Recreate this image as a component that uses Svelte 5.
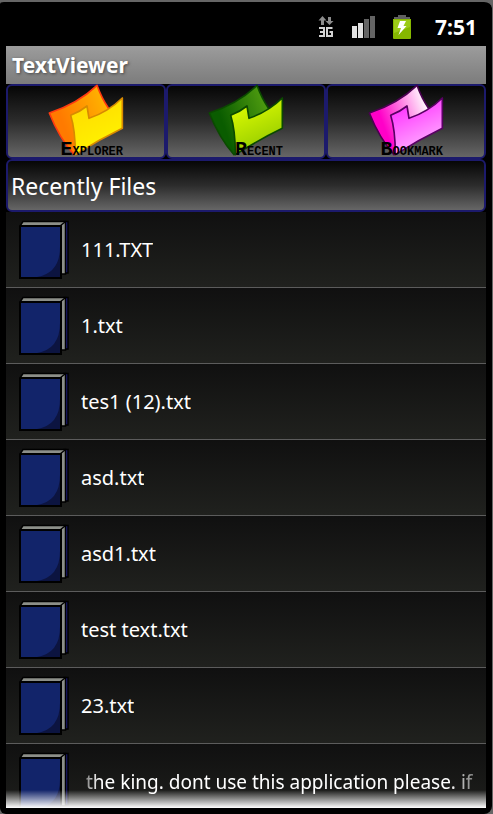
<script lang="ts">
  const tabs = [
    { id: "explorer", label: "Explorer", back: ["#ff7a00", "#ffb400"], front: ["#ffd800", "#fff600"], edge: "#ff3a10", line: "#d88a00" },
    { id: "recent", label: "Recent", back: ["#0a5c00", "#4f9c10"], front: ["#e4ff00", "#8fc800"], edge: "#0b4a00", line: "#0b4a00" },
    { id: "bookmark", label: "Bookmark", back: ["#ff00c8", "#ffffff"], front: ["#ff22ff", "#ffb8ff"], edge: "#4a0050", line: "#5a0064" },
  ];

  const files = [
    "111.TXT",
    "1.txt",
    "tes1 (12).txt",
    "asd.txt",
    "asd1.txt",
    "test text.txt",
    "23.txt",
    "the king. dont use this application please. if",
  ];

  let current = $state("recent");
</script>

<div class="device">
  <header class="status">
    <svg class="net" viewBox="0 0 16 22" aria-label="3G">
      <path fill="#8c8c8c" d="M4.500 0L8.500 4.500H6V9H3V4.500H.5zM11.500 9L7.500 5H10V1H13V5H15.500z" />
      <path fill="none" stroke="#d2d2d2" stroke-width="2" d="M1 12H6V20H1M2 16H6M14.500 12H9V20H14V16H11.500" />
    </svg>
    <svg class="signal" viewBox="0 0 24 22" aria-label="Signal">
      <path fill="#e2e2e2" d="M0 10H5V22H0zM6 7H11V22H6z" />
      <path fill="#646464" d="M12 3H17V22H12zM18 0H23V22H18z" />
    </svg>
    <svg class="battery" viewBox="0 0 18 24" aria-label="Charging">
      <path fill="#606060" d="M1 5V2H5V0H13V2H17V5z" />
      <path fill="#86b800" d="M0 4H18V23Q18 24 17 24H1Q0 24 0 23z" />
      <path fill="#9ccb18" d="M1 5H17V12L1 18z" />
      <path fill="#fff" d="M7 6H13L10.500 11H13.500L5.500 20L8 13H4.500z" />
    </svg>
    <time>7:51</time>
  </header>

  <h1>TextViewer</h1>

  <nav>
    {#each tabs as tab (tab.id)}
      <button class="tab" aria-pressed={current === tab.id} onclick={() => (current = tab.id)}>
        <svg viewBox="138 12 240 222" aria-hidden="true">
          <defs>
            <linearGradient id="{tab.id}-back" x1="0" y1="0.6" x2="1" y2="0.2">
              <stop offset="0.2" stop-color={tab.back[0]} />
              <stop offset="0.9" stop-color={tab.back[1]} />
            </linearGradient>
            <linearGradient id="{tab.id}-front" x1="0.2" y1="0" x2="0.6" y2="1">
              <stop offset="0" stop-color={tab.front[0]} />
              <stop offset="1" stop-color={tab.front[1]} />
            </linearGradient>
          </defs>
          <g stroke-width="5" stroke-linejoin="round">
            <path fill="url(#{tab.id}-back)" stroke={tab.edge} d="M148 99Q235 70 291 16Q305 55 325 84L340 130L222 224Q178 175 148 99z" />
            <path fill="url(#{tab.id}-front)" stroke={tab.line} d="M212 106Q240 95 261 78L267 115Q325 95 367 54V145Q295 180 226 224Q226 150 212 106z" />
          </g>
        </svg>
        <span class="label">{tab.label}</span>
      </button>
    {/each}
  </nav>

  <h2>Recently Files</h2>

  <ul>
    {#each files as file (file)}
      <li>
        <button class="file">
          <svg class="book" viewBox="0 0 50 60" aria-hidden="true">
            <path fill="#1c1c78" stroke="#000" stroke-width="1.500" d="M45 1.500H49V53H45z" />
            <path fill="#8c8f89" stroke="#000" stroke-width="1.500" d="M1 6L4 1.500H46.500V54H42V6z" />
            <path fill="none" stroke="#000" stroke-width="1.500" d="M41 6L46 2" />
            <path fill="#12246a" stroke="#000" stroke-width="2" d="M1 7Q1 6 2 6H42V58H1z" />
            <path fill="#0c1440" d="M41 27Q41 53 18 57H41z" />
          </svg>
          <span class="name" class:marquee={file.length > 30}>{file}</span>
        </button>
      </li>
    {/each}
  </ul>
</div>

<style>
  :global(body) {
    margin: 0;
    background: #666;
  }

  .device {
    box-sizing: border-box;
    display: flex;
    flex-direction: column;
    height: 100vh;
    margin-right: 1px;
    padding: 0 6px 6px;
    border-top: 2px solid #666;
    border-radius: 4px 8px 8px 6px;
    background: #000;
    color: #fff;
    font-family: "Noto Sans", "Open Sans", sans-serif;
  }

  .status {
    display: flex;
    flex: none;
    align-items: center;
    justify-content: flex-end;
    height: 44px;
    padding: 6px 9px 0 0;
    box-sizing: border-box;
  }

  .net {
    width: 16px;
    height: 22px;
    margin-right: 18px;
  }

  .signal {
    width: 24px;
    height: 22px;
    margin-right: 17px;
  }

  .battery {
    width: 18px;
    height: 24px;
    margin-right: 24px;
  }

  time {
    font-size: 21px;
    font-weight: 700;
  }

  h1 {
    flex: none;
    margin: 0;
    padding-left: 6px;
    background: linear-gradient(#9c9c9c, #7c7c7c);
    font-size: 21px;
    font-weight: 700;
    line-height: 38px;
    text-shadow: 1px 1px 3px #444;
  }

  nav {
    display: flex;
    flex: none;
  }

  button {
    margin: 0;
    color: inherit;
    font: inherit;
    cursor: pointer;
  }

  .tab {
    position: relative;
    display: flex;
    flex: 1;
    justify-content: center;
    height: 75px;
    padding: 0;
    border: 2px solid #1c1a6c;
    border-radius: 6px;
    background: linear-gradient(#060606, #2c2c2c 50%, #666);
  }

  .tab svg {
    width: 80px;
    height: 74px;
    margin-top: -2px;
  }

  .label {
    position: absolute;
    right: 41px;
    bottom: -1px;
    color: #000;
    font-family: "Liberation Mono", monospace;
    font-size: 17px;
    font-weight: 700;
    font-variant: small-caps;
    line-height: 14px;
  }

  .label::first-letter {
    font-size: 20px;
  }

  h2 {
    flex: none;
    margin: 0;
    padding: 2px 0 0 3px;
    border: 2px solid #1c1a6c;
    border-radius: 6px;
    background: linear-gradient(#060606, #2c2c2c 50%, #666);
    font-size: 23px;
    font-weight: 400;
    line-height: 47px;
  }

  ul {
    position: relative;
    flex: 1;
    min-height: 0;
    margin: 0;
    padding: 0;
    overflow: hidden;
    list-style: none;
  }

  ul::after {
    content: "";
    position: absolute;
    right: 0;
    bottom: 0;
    left: 0;
    height: 18px;
    background: linear-gradient(rgba(255, 255, 255, 0), #fff);
    pointer-events: none;
  }

  .file {
    display: flex;
    align-items: center;
    width: 100%;
    height: 76px;
    padding: 0 5px 0 13px;
    border: 0;
    border-bottom: 1px solid #5c5c5c;
    background: linear-gradient(#101010, #20211e);
    font-size: 20px;
    text-align: left;
  }

  .book {
    flex: none;
    width: 50px;
    height: 60px;
    margin-right: 12px;
  }

  .name {
    overflow: hidden;
    white-space: nowrap;
  }

  .marquee {
    flex: 1;
    padding-left: 5px;
    font-size: 19px;
    mask-image: linear-gradient(90deg, #0004, #000 18px, #000 calc(100% - 32px), #0004);
  }
</style>
